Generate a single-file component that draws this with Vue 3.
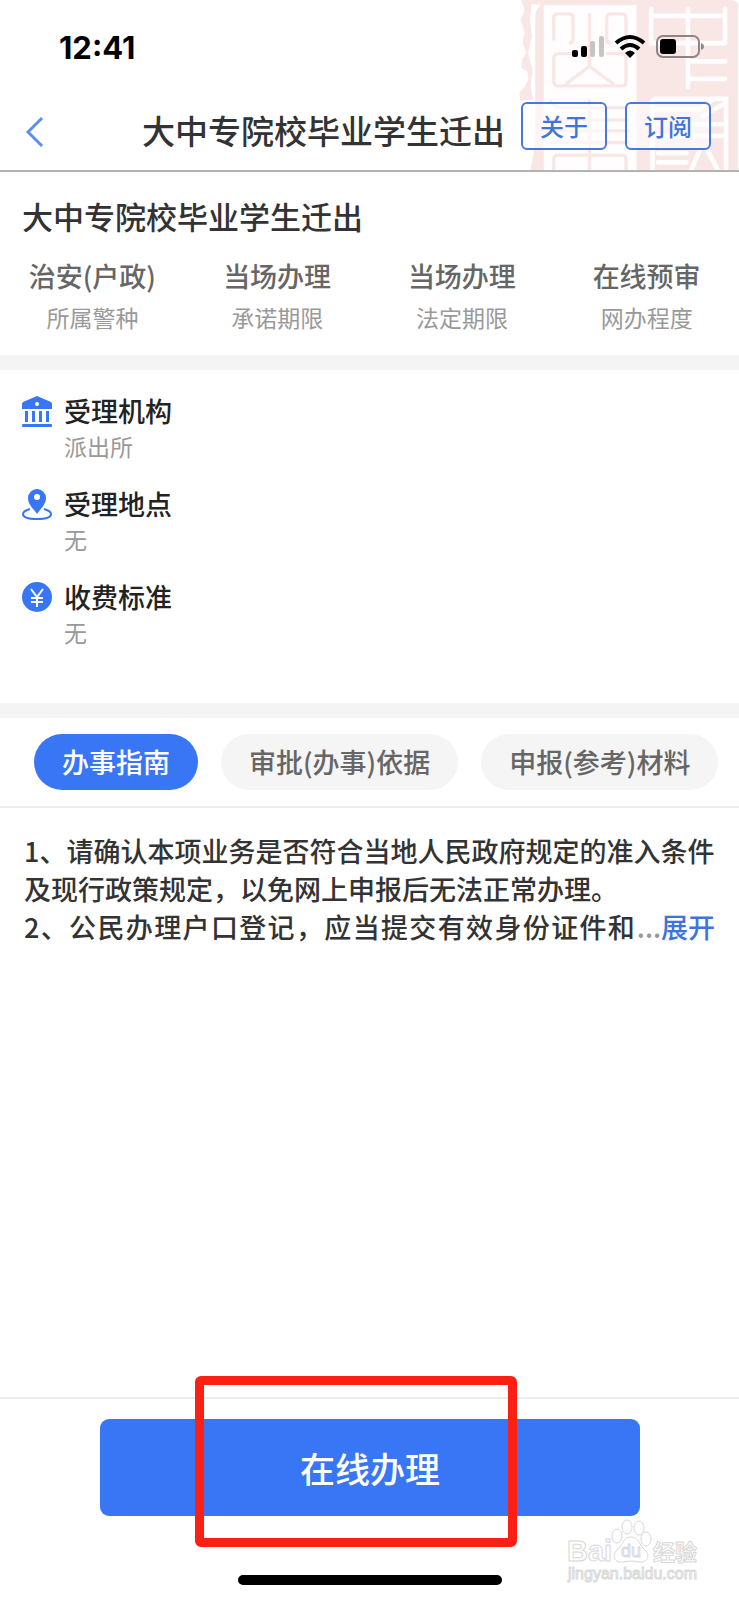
<script setup>
import { ref } from "vue";

const serviceName = "大中专院校毕业学生迁出";

const stats = [
  { value: "治安(户政)", label: "所属警种" },
  { value: "当场办理", label: "承诺期限" },
  { value: "当场办理", label: "法定期限" },
  { value: "在线预审", label: "网办程度" },
];

const details = [
  { icon: "bank", title: "受理机构", text: "派出所" },
  { icon: "place", title: "受理地点", text: "无" },
  { icon: "fee", title: "收费标准", text: "无" },
];

const tabs = ["办事指南", "审批(办事)依据", "申报(参考)材料"];
const activeTab = ref(0);
</script>

<template>
  <div class="page">
    <header class="header">
      <svg class="seal" viewBox="0 0 717 513" aria-hidden="true">
        <path
          class="seal-fill"
          d="M62 0 L94 0 L88 60 L94 110 L82 160 L96 210 L90 260 L98 300 L60 304 L56 280 L72 262 L84 240 L80 215 L62 205 L66 175 L78 160 L66 130 L72 95 L60 60 L72 30 Z"
        />
        <path
          class="seal-fill"
          d="M90 0 H700 Q717 4 717 20 V513 H90 L98 470 L104 400 V60 Q104 24 122 14 L92 12 Z"
        />
        <path class="seal-blank" d="M130 15 H410 V513 H130 Z" />
        <g class="seal-line">
          <path d="M160 122 V55 Q160 42 173 42 H205 Q218 42 218 55 V120 Q218 130 206 130" />
          <path d="M268 40 V205 M268 200 L195 255 M268 200 L342 255" />
          <path d="M378 130 V55 Q378 42 365 42 H333 Q320 42 320 55 V120 Q320 130 332 130" />
          <path d="M222 162 H175 Q160 162 160 178 V245 Q160 259 175 259 H366 Q378 259 378 245 V178 Q378 162 366 162 H318" />
          <path d="M150 305 Q160 325 180 325 H390 M150 362 H390 M150 395 H390 M150 430 H390" />
          <path d="M268 300 V513" />
          <path d="M160 513 V480 Q160 468 175 468 H366 Q378 468 378 480 V513" />
        </g>
        <g class="seal-cut">
          <path d="M454 28 V130 H677 M454 48 H677 M677 28 V130 M565 28 V262" />
          <path d="M565 185 H677 M565 238 H677" />
          <path d="M458 513 V310 Q458 298 470 298 H680 V513" />
          <path d="M470 330 H600 L640 300 M610 350 L680 310 M470 375 H670 M470 410 H670" />
          <path d="M475 462 H560 M475 490 H560 M600 455 L575 513 M625 455 L655 513" />
        </g>
      </svg>

      <div class="status-bar">
        <span class="clock">12:41</span>
        <svg class="status-icons" viewBox="0 0 134 26" aria-hidden="true">
          <rect x="1" y="16" width="6" height="7" rx="2" />
          <rect x="10" y="12" width="6" height="11" rx="2" />
          <rect x="19" y="7" width="5" height="16" rx="2" fill="#c8c4c4" />
          <rect x="28" y="2" width="5" height="21" rx="2" fill="#c8c4c4" />
          <g fill="none" stroke="#000" stroke-width="4">
            <path d="M45 9 Q59 -3 73 9" />
            <path d="M50 15 Q59 7 68 15" />
          </g>
          <path d="M54 19 Q59 14 64 19 L59 24 Z" />
          <rect x="86" y="2" width="42" height="21" rx="6" fill="none" stroke="#8d8585" stroke-width="2" />
          <rect x="89" y="5" width="16" height="15" rx="3" />
          <path d="M130 9 Q133 10 133 13 Q133 15 130 16 Z" fill="#8d8585" />
        </svg>
      </div>

      <nav class="nav">
        <button class="back" type="button" aria-label="返回">
          <svg viewBox="0 0 18 32" aria-hidden="true">
            <path d="M16 2 L2 16 L16 30" fill="none" stroke="#5b8df2" stroke-width="3" />
          </svg>
        </button>
        <h1 class="nav-title">{{ serviceName }}</h1>
        <div class="nav-actions">
          <button class="nav-btn" type="button">关于</button>
          <button class="nav-btn" type="button">订阅</button>
        </div>
      </nav>
    </header>

    <section class="summary">
      <h2 class="summary-title">{{ serviceName }}</h2>
      <div class="stats">
        <div v-for="stat in stats" :key="stat.label" class="stat">
          <div class="stat-value">{{ stat.value }}</div>
          <div class="stat-label">{{ stat.label }}</div>
        </div>
      </div>
    </section>

    <section class="details">
      <div v-for="item in details" :key="item.title" class="detail">
        <svg v-if="item.icon === 'bank'" class="detail-icon" viewBox="0 0 30 32" aria-hidden="true">
          <path d="M15 0 L29 6 Q30 7 30 8 V13 H0 V8 Q0 7 1 6 Z" />
          <circle cx="15" cy="8" r="2" fill="#fff" />
          <path d="M3 15 h3 v11 h-3 Z M10 15 h3 v11 h-3 Z M17 15 h3 v11 h-3 Z M24 15 h3 v11 h-3 Z" />
          <rect x="0" y="28" width="30" height="3" rx="1" />
        </svg>
        <svg v-else-if="item.icon === 'place'" class="detail-icon" viewBox="0 0 30 32" aria-hidden="true">
          <path
            d="M8 20 Q1 22 1 25 Q1 30 15 30 Q29 30 29 25 Q29 22 22 20"
            fill="none"
            stroke="#3876f6"
            stroke-width="2"
          />
          <path
            fill-rule="evenodd"
            d="M15 0 A9 9 0 0 1 24 9 C24 16 18 20 15 25 C12 20 6 16 6 9 A9 9 0 0 1 15 0 Z M15 5 A3 3 0 1 0 15 11 A3 3 0 1 0 15 5 Z"
          />
        </svg>
        <svg v-else class="detail-icon" viewBox="0 0 30 32" aria-hidden="true">
          <circle cx="15" cy="15" r="15" />
          <path
            d="M9 7 L15 15 L21 7 M15 15 V25 M9 16 H21 M9 20 H21"
            fill="none"
            stroke="#fff"
            stroke-width="2"
          />
        </svg>
        <div>
          <h3 class="detail-title">{{ item.title }}</h3>
          <p class="detail-text">{{ item.text }}</p>
        </div>
      </div>
    </section>

    <div class="tabs">
      <button
        v-for="(tab, i) in tabs"
        :key="tab"
        type="button"
        :class="['tab', { active: i === activeTab }]"
        @click="activeTab = i"
      >
        {{ tab }}
      </button>
    </div>

    <main class="guide">
      <p>1、请确认本项业务是否符合当地人民政府规定的准入条件及现行政策规定，以免网上申报后无法正常办理。</p>
      <div class="guide-last">
        <p class="guide-cut">2、公民办理户口登记，应当提交有效身份证件和</p>
        <span class="dots">...</span>
        <a class="expand" href="#">展开</a>
      </div>
    </main>

    <footer class="footer">
      <button class="submit" type="button">在线办理</button>
      <div class="highlight"></div>
      <div class="home-indicator"></div>
      <svg class="watermark" viewBox="0 0 136 66" aria-hidden="true">
        <g fill="#fff" stroke="#d8d8d8" stroke-width="1">
          <text x="1" y="42" class="wm-brand">Bai</text>
          <ellipse cx="51" cy="17" rx="5" ry="7" />
          <ellipse cx="61" cy="8" rx="5" ry="7" />
          <ellipse cx="73" cy="9" rx="5" ry="7" />
          <ellipse cx="80" cy="20" rx="5" ry="7" />
          <path d="M65 18 C57 18 57 26 51 31 C45 37 49 44 57 43 Q65 41 73 43 C81 44 85 37 79 31 C73 26 73 18 65 18 Z" />
          <text x="55" y="38" class="wm-du">du</text>
          <text x="87" y="41" class="wm-cn">经验</text>
          <text x="2" y="60" class="wm-url">jingyan.baidu.com</text>
        </g>
      </svg>
    </footer>
  </div>
</template>

<style>
body {
  margin: 0;
  background: #fff;
}
</style>

<style scoped>
.page {
  display: flex;
  flex-direction: column;
  min-height: 100vh;
  background: #fff;
  color: #333;
  font-family: "Noto Sans CJK SC", sans-serif;
  font-weight: 500;
}

h1,
h2,
h3,
p {
  margin: 0;
  font-weight: 500;
}

button {
  padding: 0;
  border: none;
  background: none;
  font: inherit;
  cursor: pointer;
}

.header {
  position: relative;
  border-bottom: 2px solid #b4b2b2;
}

.seal {
  position: absolute;
  top: 0;
  right: 0;
  width: 239px;
  height: 100%;
}

.seal-fill {
  fill: #f9e7e5;
}

.seal-blank {
  fill: #fffdfd;
}

.seal-line {
  fill: none;
  stroke: #f9e7e5;
  stroke-width: 10;
}

.seal-cut {
  fill: none;
  stroke: #fffdfd;
  stroke-width: 14;
  stroke-linecap: round;
}

.status-bar {
  position: relative;
  display: flex;
  align-items: center;
  justify-content: space-between;
  height: 94px;
  padding: 0 34px 0 59px;
}

.clock {
  color: #000;
  font-family: Inter, sans-serif;
  font-size: 31px;
  font-weight: 700;
}

.status-icons {
  width: 134px;
  height: 26px;
}

.nav {
  position: relative;
  display: flex;
  align-items: center;
  height: 76px;
  padding: 0 28px 0 26px;
}

.back {
  width: 18px;
  height: 32px;
  margin-right: 98px;
}

.back svg {
  display: block;
}

.nav-title {
  padding-bottom: 4px;
  font-size: 33px;
  line-height: 40px;
  white-space: nowrap;
}

.nav-actions {
  display: flex;
  gap: 18px;
  margin-left: auto;
  padding-bottom: 12px;
}

.nav-btn {
  box-sizing: border-box;
  width: 86px;
  height: 48px;
  border: 2px solid #4479e0;
  border-radius: 6px;
  background: rgba(255, 255, 255, 0.6);
  color: #3f74dc;
  font-size: 24px;
  line-height: 40px;
}

.summary {
  padding: 24px 0 23px;
  border-bottom: 15px solid #f4f4f4;
}

.summary-title {
  padding: 0 22px;
  font-size: 31px;
  line-height: 40px;
}

.stats {
  display: grid;
  grid-template-columns: repeat(4, 1fr);
  margin-top: 22px;
  text-align: center;
}

.stat-value {
  color: #666;
  font-size: 27px;
  line-height: 36px;
}

.stat-label {
  margin-top: 8px;
  color: #999;
  font-size: 23px;
  font-weight: 400;
  line-height: 30px;
}

.details {
  display: flex;
  flex-direction: column;
  gap: 23px;
  padding: 23px 22px 54px;
  border-bottom: 15px solid #f4f4f4;
}

.detail {
  display: flex;
  gap: 12px;
}

.detail-icon {
  width: 30px;
  height: 32px;
  margin-top: 3px;
  fill: #3876f6;
}

.detail-title {
  color: #222;
  font-size: 27px;
  line-height: 36px;
}

.detail-text {
  color: #999;
  font-size: 23px;
  font-weight: 400;
  line-height: 34px;
}

.tabs {
  display: flex;
  gap: 23px;
  padding: 16px 0 16px 34px;
  border-bottom: 2px solid #ededed;
  overflow-x: auto;
}

.tab {
  flex: none;
  height: 56px;
  padding: 0 28px;
  border-radius: 28px;
  background: #f5f5f5;
  color: #666;
  font-size: 27px;
  line-height: 56px;
}

.tab.active {
  background: #3876f6;
  color: #fff;
}

.guide {
  flex: 1;
  padding: 24px;
  font-size: 27px;
  line-height: 38px;
}

.guide-last {
  display: flex;
}

.guide-cut {
  flex: 1;
  text-align-last: justify;
}

.dots {
  padding-left: 2px;
  color: #999;
}

.expand {
  color: #3f74dc;
  text-decoration: none;
}

.footer {
  position: relative;
  display: flex;
  flex-direction: column;
  align-items: center;
  padding: 20px 99px 15px 100px;
  border-top: 2px solid #ececec;
}

.submit {
  width: 100%;
  height: 97px;
  border-radius: 9px;
  background: #3876f6;
  color: #fff;
  font-size: 35px;
  line-height: 94px;
}

.home-indicator {
  width: 264px;
  height: 10px;
  margin-top: 59px;
  border-radius: 5px;
  background: #000;
}

/* marker frame drawn over the submit button */
.highlight {
  position: absolute;
  top: -23px;
  left: 195px;
  box-sizing: border-box;
  width: 322px;
  height: 171px;
  border: 9px solid #fb1f14;
  border-radius: 6px;
  pointer-events: none;
}

.watermark {
  position: absolute;
  right: 37px;
  bottom: 15px;
  width: 136px;
  height: 66px;
}

.wm-brand {
  font-family: "Liberation Sans", sans-serif;
  font-size: 29px;
  font-weight: 700;
}

.wm-du {
  font-family: "Liberation Sans", sans-serif;
  font-size: 18px;
}

.wm-cn {
  font-size: 22px;
  font-weight: 700;
}

.wm-url {
  font-family: "Liberation Sans", sans-serif;
  font-size: 16px;
}
</style>
